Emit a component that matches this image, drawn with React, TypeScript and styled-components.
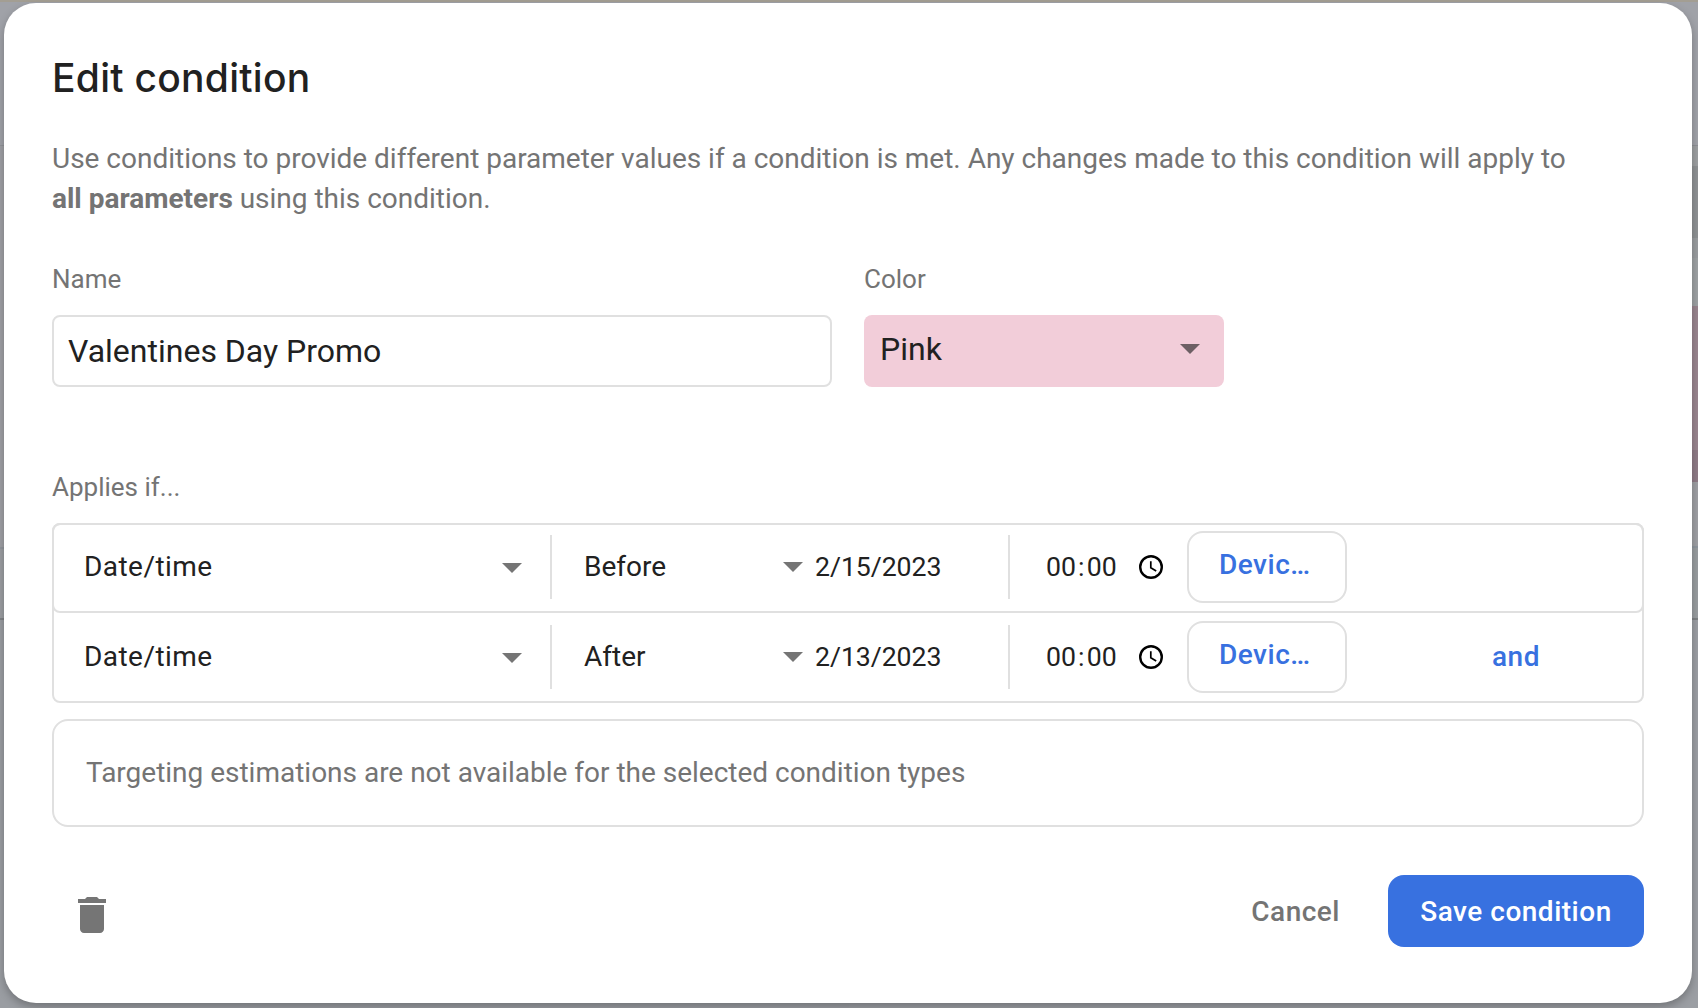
import React from "react";
import styled, { createGlobalStyle } from "styled-components";

const ink = "#212121";
const muted = "#747474";
const line = "#e0e0e0";
const blue = "#3871e0";

const GlobalStyle = createGlobalStyle`
  * { box-sizing: border-box; }
  html, body { margin: 0; padding: 0; }
  body { width: 1698px; height: 1008px; overflow: hidden; font-family: Roboto, sans-serif; color: ${ink}; }
  button, input { font-family: inherit; }
`;

const Page = styled.div`
  position: relative;
  width: 1698px;
  height: 1008px;
  padding: 3px 6px 5px 4px;
  overflow: hidden;
  background: #9a9ca2;
`;

const Backdrop = styled.div<{ $side: "left" | "right" }>`
  position: absolute;
  top: 0;
  bottom: 0;
  width: 849px;
  ${({ $side }) => $side}: 0;
  display: flex;
  flex-direction: column;
`;

const Band = styled.div<{ $h: number; $bg: string }>`
  flex: none;
  height: ${({ $h }) => $h}px;
  background: ${({ $bg }) => $bg};
`;

const Dialog = styled.main`
  position: relative;
  display: flex;
  flex-direction: column;
  height: 1000px;
  padding: 51px 48px 0;
  border-radius: 32px;
  background: #fff;
  box-shadow: 0 4px 8px rgba(0, 0, 0, 0.26);
`;

const Title = styled.h1`
  margin: 0 0 37px;
  font: 500 39px/48px Inter, sans-serif;
  letter-spacing: 0.27px;
`;

const Description = styled.p`
  margin: 0;
  height: 80px;
  width: 1540px;
  font-size: 28px;
  line-height: 40px;
  letter-spacing: -0.01px;
  color: ${muted};
`;

const Label = styled.label`
  display: block;
  height: 32px;
  margin-bottom: 20px;
  font-size: 26px;
  line-height: 32px;
  color: ${muted};
`;

const Fields = styled.div`
  display: flex;
  gap: 32px;
  margin: 44px 0 84px;
`;

const Field = styled.div<{ $w: number }>`
  width: ${({ $w }) => $w}px;
`;

const NameInput = styled.input`
  display: block;
  width: 100%;
  height: 72px;
  padding: 0 14px;
  border: 2px solid ${line};
  border-radius: 8px;
  outline: none;
  color: ${ink};
  font-size: 32px;
`;

const ColorSelect = styled.div`
  display: flex;
  align-items: center;
  justify-content: space-between;
  height: 72px;
  padding: 0 24px 4px 16px;
  border-radius: 8px;
  background: #f2cdd9;
  font-size: 32px;
  line-height: 40px;
`;

const Arrow = styled.span<{ $tone?: string }>`
  flex: none;
  border: solid transparent;
  border-width: 10px 10px 0;
  border-top-color: ${({ $tone }) => $tone ?? "#757575"};
`;

const Conditions = styled.section`
  height: 180px;
  border: 2px solid ${line};
  border-radius: 8px;
`;

const Row = styled.div<{ $outlined?: boolean }>`
  display: flex;
  align-items: center;
  height: 90px;
  margin: -2px -2px 0;
  padding: 0 2px 2px;
  border-radius: 8px;
  font-size: 28px;
  line-height: 40px;
  box-shadow: ${({ $outlined }) => ($outlined ? `inset 0 0 0 2px ${line}` : "none")};
  & + & { margin-top: 0; }
`;

const SelectCell = styled.div<{ $w: number; $pad: string }>`
  display: flex;
  align-items: center;
  justify-content: space-between;
  width: ${({ $w }) => $w}px;
  height: 64px;
  padding: ${({ $pad }) => $pad};
`;

const TypeCell = styled(SelectCell)`
  border-right: 2px solid ${line};
  letter-spacing: 0.45px;
  ${Arrow} { margin-top: 2px; }
`;

const DateCell = styled.div`
  width: 197px;
  height: 64px;
  padding-left: 2px;
  border-right: 2px solid ${line};
  font-size: 26.67px;
  line-height: 64px;
  letter-spacing: -0.05px;
`;

const TimeCell = styled.div`
  display: flex;
  align-items: center;
  width: 177px;
  padding-left: 36px;
  font-size: 26.67px;
`;

const Digits = styled.span`
  width: 30px;
`;

const Colon = styled.span`
  width: 10.7px;
  text-align: center;
`;

const ClockIcon = styled.svg`
  width: 24px;
  height: 24px;
  margin-left: 22.3px;
  fill: none;
  stroke: #000;
`;

const DeviceButton = styled.button`
  width: 160px;
  height: 72px;
  padding: 0 30px 4px;
  border: 2px solid ${line};
  border-radius: 16px;
  background: #fff;
  color: ${blue};
  font-size: 28px;
  font-weight: 500;
  line-height: 40px;
  letter-spacing: 0.5px;
  text-align: left;
  white-space: nowrap;
`;

const AndLink = styled.span`
  margin-left: 145px;
  color: ${blue};
  font-weight: 500;
  letter-spacing: 0.5px;
`;

const Notice = styled.div`
  display: flex;
  align-items: center;
  height: 108px;
  margin-top: 16px;
  padding: 0 32px;
  border: 2px solid ${line};
  border-radius: 16px;
  color: ${muted};
  font-size: 28px;
  line-height: 40px;
  letter-spacing: -0.01px;
`;

const Footer = styled.footer`
  display: flex;
  align-items: center;
  height: 72px;
  margin-top: 48px;
`;

const TrashIcon = styled.svg`
  width: 48px;
  height: 48px;
  margin: 8px auto 0 16px;
  fill: #757575;
`;

const TextButton = styled.button`
  padding: 0;
  border: 0;
  background: none;
  color: ${muted};
  font-size: 28px;
  font-weight: 500;
  letter-spacing: 0.5px;
`;

const SaveButton = styled.button`
  width: 256px;
  height: 72px;
  margin-left: 48px;
  padding: 0;
  border: 0;
  border-radius: 16px;
  background: ${blue};
  color: #fff;
  font-size: 28px;
  font-weight: 500;
  letter-spacing: 0.5px;
  white-space: nowrap;
`;

const leftBands: [number, string][] = [
  [2, "#a39e93"],
  [143, "#a0a2a8"],
  [1, "#929499"],
  [401, "#9fa0a5"],
  [2, "#92969c"],
  [69, "#9b9ea2"],
  [2, "#808386"],
  [388, "#9a9da2"],
];

const rightBands: [number, string][] = [
  [2, "#a39e93"],
  [143, "#a0a2a8"],
  [1, "#8e9095"],
  [20, "#9c9fa1"],
  [72, "#8f9294"],
  [20, "#999c9f"],
  [48, "#9da1a3"],
  [144, "#99858f"],
  [32, "#8f7b86"],
  [64, "#9e9fa3"],
  [2, "#8f969d"],
  [70, "#989c9f"],
  [2, "#7d8083"],
  [388, "#9b9ea3"],
];

const rows = [
  { op: "Before", date: "2/15/2023" },
  { op: "After", date: "2/13/2023" },
];

const Clock = () => (
  <ClockIcon viewBox="0 0 24 24">
    <circle cx="12" cy="12" r="10.8" strokeWidth="2.4" />
    <path d="M11.8 6.2v6.6l5.4 3.2" strokeWidth="1.7" />
  </ClockIcon>
);

export default function App() {
  return (
    <Page>
      <GlobalStyle />
      <Backdrop $side="left">
        {leftBands.map(([h, bg], i) => <Band key={i} $h={h} $bg={bg} />)}
      </Backdrop>
      <Backdrop $side="right">
        {rightBands.map(([h, bg], i) => <Band key={i} $h={h} $bg={bg} />)}
      </Backdrop>
      <Dialog>
        <Title>Edit condition</Title>
        <Description>
          Use conditions to provide different parameter values if a condition is met. Any changes made to this condition will apply to <b>all parameters</b> using this condition.
        </Description>
        <Fields>
          <Field $w={780}>
            <Label>Name</Label>
            <NameInput defaultValue="Valentines Day Promo" />
          </Field>
          <Field $w={360}>
            <Label>Color</Label>
            <ColorSelect>
              Pink
              <Arrow $tone="#6d5f64" />
            </ColorSelect>
          </Field>
        </Fields>
        <Label>Applies if...</Label>
        <Conditions>
          {rows.map((row, i) => (
            <Row key={row.op} $outlined={i === 0}>
              <TypeCell $w={498} $pad="0 28px 0 30px">
                Date/time
                <Arrow />
              </TypeCell>
              <SelectCell $w={261} $pad="0 10px 0 32px">
                {row.op}
                <Arrow />
              </SelectCell>
              <DateCell>{row.date}</DateCell>
              <TimeCell>
                <Digits>00</Digits>
                <Colon>:</Colon>
                <Digits>00</Digits>
                <Clock />
              </TimeCell>
              <DeviceButton>Devic…</DeviceButton>
              {i > 0 && <AndLink>and</AndLink>}
            </Row>
          ))}
        </Conditions>
        <Notice>Targeting estimations are not available for the selected condition types</Notice>
        <Footer>
          <TrashIcon viewBox="0 0 24 24">
            <path d="M6 19c0 1.1.9 2 2 2h8c1.1 0 2-.9 2-2V7H6v12zM19 4h-3.5l-1-1h-5l-1 1H5v2h14V4z" />
          </TrashIcon>
          <TextButton>Cancel</TextButton>
          <SaveButton>Save condition</SaveButton>
        </Footer>
      </Dialog>
    </Page>
  );
}
